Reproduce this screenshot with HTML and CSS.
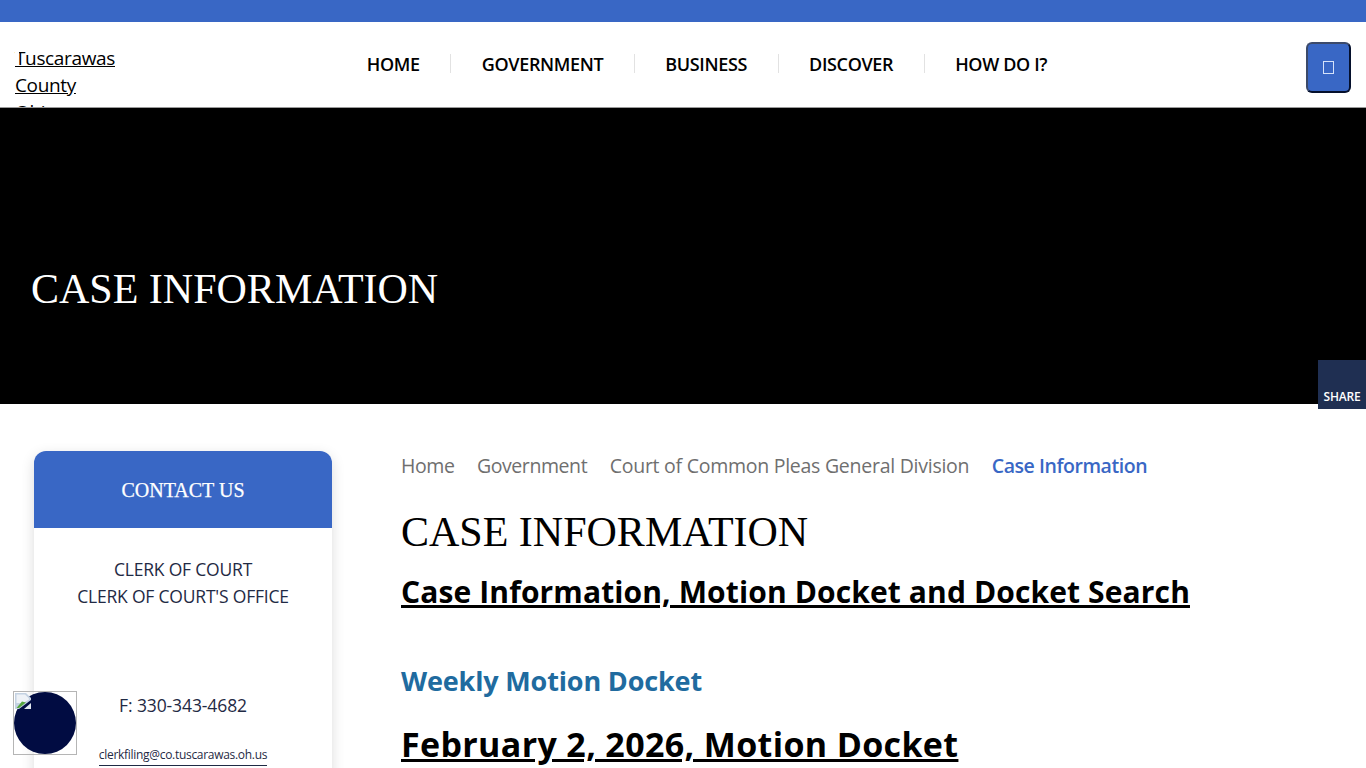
FILE: index.html
```html
<!DOCTYPE html>
<html lang="en">
<head>
<meta charset="utf-8">
<title>Case Information</title>
<link rel="stylesheet" href="styles.css">
</head>
<body>
<div class="topbar"></div>
<header class="header">
  <div class="logo"><a href="#">Tuscarawas County Ohio</a></div>
  <nav class="nav">
    <a href="#">HOME</a><span class="sep"></span>
    <a href="#">GOVERNMENT</a><span class="sep"></span>
    <a href="#">BUSINESS</a><span class="sep"></span>
    <a href="#">DISCOVER</a><span class="sep"></span>
    <a href="#">HOW DO I?</a>
  </nav>
  <button class="search"><span class="tofu"></span></button>
</header>
<section class="hero"><h1>CASE INFORMATION</h1></section>
<a class="share" href="#">SHARE</a>
<main class="main">
  <aside class="card">
    <div class="card-head">CONTACT US</div>
    <div class="card-body">
      <p class="office">CLERK OF COURT<br>CLERK OF COURT'S OFFICE</p>
      <p class="phone">F: 330-343-4682</p>
      <p class="email"><a href="#">clerkfiling@co.tuscarawas.oh.us</a></p>
    </div>
  </aside>
  <article class="content">
    <nav class="crumbs">
      <a class="tight" href="#">Home</a><a class="tight" href="#">Government</a><a href="#">Court of Common Pleas General Division</a><a class="current" href="#">Case Information</a>
    </nav>
    <h1 class="title">CASE INFORMATION</h1>
    <h2 class="link-head"><a href="#">Case Information, Motion Docket and Docket Search</a></h2>
    <h3 class="sub">Weekly Motion Docket</h3>
    <h2 class="link-head big"><a href="#">February 2, 2026, Motion Docket</a></h2>
  </article>
</main>
<div class="widget">
  <div class="circle"></div>
  <svg class="broken" width="16" height="16" viewBox="0 0 16 16"><path d="M0 0H11L16 5V7L4 16H0Z" fill="#c4d2e2"/><path d="M1.500 1.500H10L14 5.500V6.500L8 10H1.500Z" fill="#eef2f7"/><path d="M1.500 15L7 8.500L11 9.500L4 15Z" fill="#56a63f"/><path d="M16 10V16H9Z" fill="#dfe6ee"/></svg>
</div>
</body>
</html>
```
FILE: styles.css
```css
html, body { margin: 0; padding: 0; height: 768px; overflow: hidden; background: #fff; }
body { font-family: "Open Sans", "Noto Sans", sans-serif; color: #000; }
.topbar { height: 22px; background: #3967c5; }
.header { height: 85px; border-bottom: 1px solid #9a9a9a; display: flex; align-items: center; justify-content: space-between; padding: 0 15px; overflow: hidden; background: #fff; }
.logo { position: relative; width: 104px; height: 85px; padding-top: 23px; box-sizing: border-box; font-size: 19px; line-height: 27px; letter-spacing: -0.35px; align-self: flex-start; }
.logo::before { content: ""; position: absolute; left: 0; top: 28px; width: 4px; height: 5px; background: #fff; }
.logo a { color: #000; }
.nav { display: flex; align-items: center; margin: 0 0 2px -11px; }
.nav a { color: #000; text-decoration: none; font-size: 18px; font-weight: 600; line-height: 24px; letter-spacing: -0.35px; }
.sep { width: 1px; height: 19px; background: #e2e2e2; margin: 0 30.5px; }
.search { width: 45px; height: 51px; margin-top: 5px; padding: 0; background: #3967c5; border: 2px solid; border-color: #3c4a6a #05102c #05102c #3c4a6a; border-radius: 6px; display: flex; align-items: center; justify-content: center; }
.tofu { width: 9px; height: 11px; border: 1px solid #d5e2fa; display: block; }
.hero { height: 296px; background: #000; display: flex; align-items: center; padding-left: 31px; }
.hero h1 { margin: 66px 0 0; color: #fff; font: 400 42px/48px "Liberation Serif", serif; }
.share { position: fixed; left: 1318px; top: 360px; width: 48px; height: 49px; box-sizing: border-box; padding-top: 29px; background: #1f2f52; color: #fff; text-decoration: none; text-align: center; font-size: 12px; line-height: 16px; font-weight: 600; letter-spacing: -0.2px; }
.main { display: flex; align-items: flex-start; padding: 47px 0 0 34px; }
.card { width: 298px; flex: none; box-shadow: 0 4px 14px rgba(0,0,0,.14); border-radius: 12px 12px 0 0; }
.card-head { height: 77px; background: #3967c5; color: #fff; border-radius: 12px 12px 0 0; font: 400 20px/79px "Liberation Serif", serif; text-align: center; -webkit-text-stroke: 0.25px #fff; }
.card-body { background: #fff; text-align: center; color: #1f2a44; height: 300px; overflow: hidden; }
.office { margin: 28px 0 0; font-size: 17.5px; line-height: 27px; letter-spacing: -0.2px; }
.phone { margin: 82px 0 0; font-size: 17.5px; line-height: 27px; letter-spacing: -0.1px; }
.email { margin: 27px 0 0; font-size: 12px; line-height: 18px; letter-spacing: -0.3px; }
.email a { color: #1f2a44; text-decoration: none; border-bottom: 1px solid #1f2a44; padding-bottom: 2px; }
.content { margin-left: 69px; flex: 1; }
.crumbs { display: flex; gap: 22.5px; font-size: 19.5px; line-height: 30px; }
.crumbs a { color: #6f6f6f; text-decoration: none; letter-spacing: -0.26px; }
.crumbs a.tight { letter-spacing: -0.42px; }
.crumbs a.current { color: #3967c5; font-weight: 600; letter-spacing: -0.45px; }
.title { margin: 27px 0 0; font: 400 42px/48px "Liberation Serif", serif; color: #000; }
.link-head { margin: 14px 0 0; font-size: 30px; line-height: 44px; font-weight: 700; letter-spacing: 0.12px; }
.link-head a { color: #000; }
.sub { margin: 47px 0 0; font-size: 27px; line-height: 40px; font-weight: 700; letter-spacing: -0.15px; color: #206b9f; }
.big { margin: 20px 0 0; font-size: 34px; line-height: 46px; letter-spacing: 0.35px; }
.widget { position: fixed; left: 13px; top: 691px; width: 62px; height: 62px; border: 1px solid #b5b5b5; }
.circle { width: 62px; height: 62px; border-radius: 50%; background: #010c42; }
.broken { position: absolute; left: 1px; top: 1px; }
```
